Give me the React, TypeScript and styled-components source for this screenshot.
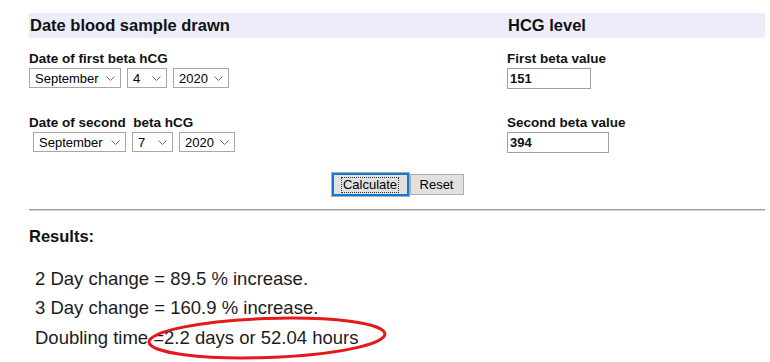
import React, {FC} from "react";
import styled, {createGlobalStyle} from "styled-components";

const GlobalStyle = createGlobalStyle`
  body {
    margin: 0;
    background: #fff;
    font-family: "Liberation Sans", Arial, sans-serif;
    color: #000;
  }
`;

const Page = styled.div`
  width: 770px;
  box-sizing: border-box;
  padding: 13px 5px 0 29px;
  overflow: hidden;
  height: 362px;
`;

const HeaderBand = styled.div`
  display: grid;
  grid-template-columns: 478px 1fr;
  align-items: center;
  height: 25px;
  background: #ececfb;
  font-size: 16.5px;
  font-weight: bold;
  color: #111;
  div {
    padding-left: 1px;
  }
`;

const FieldRow = styled.div<{$top: number}>`
  display: grid;
  grid-template-columns: 478px 1fr;
  margin-top: ${(p) => p.$top}px;
`;

const FieldLabel = styled.div`
  font-size: 13.5px;
  font-weight: bold;
  line-height: 15px;
  white-space: pre;
  color: #111;
`;

const SelectGroup = styled.div<{$indent: number}>`
  display: flex;
  gap: 6px;
  margin-top: 2px;
  padding-left: ${(p) => p.$indent}px;
`;

const SelectBox = styled.div<{$width: number}>`
  display: flex;
  align-items: center;
  box-sizing: border-box;
  width: ${(p) => p.$width}px;
  height: 20px;
  border: 1px solid #a6a6a6;
  background: #fff;
  svg {
    flex: none;
    margin-right: 5px;
  }
`;

const NativeSelect = styled.select`
  appearance: none;
  flex: 1;
  min-width: 0;
  height: 100%;
  border: 0;
  outline: none;
  background: transparent;
  padding: 0 0 0 5px;
  font-family: "Liberation Sans", Arial, sans-serif;
  font-size: 13px;
  color: #000;
`;

const ValueInput = styled.input<{$width: number}>`
  display: block;
  box-sizing: border-box;
  width: ${(p) => p.$width}px;
  height: 21px;
  margin-top: 2px;
  padding: 0 2px;
  border: 1px solid #a0a0a0;
  font-family: "Liberation Sans", Arial, sans-serif;
  font-size: 13px;
  font-weight: bold;
  color: #111;
  outline: none;
`;

const ButtonRow = styled.div`
  display: flex;
  justify-content: center;
  align-items: center;
  margin-top: 19px;
`;

const FormButton = styled.button<{$focused?: boolean}>`
  display: flex;
  align-items: center;
  justify-content: center;
  box-sizing: border-box;
  width: ${(p) => (p.$focused ? 79 : 54)}px;
  height: ${(p) => (p.$focused ? 25 : 21)}px;
  padding: 0;
  border: 1px solid #adadad;
  background: #e1e1e1;
  box-shadow: ${(p) => (p.$focused ? "inset 0 0 0 2px #0f78d8" : "none")};
  font-family: "Liberation Sans", Arial, sans-serif;
  font-size: 13px;
  color: #000;
  span {
    line-height: 14px;
    padding: 0 1px;
    outline: ${(p) => (p.$focused ? "1px dotted #333" : "none")};
  }
`;

const Rule = styled.div`
  margin-top: 12px;
  height: 1px;
  border-top: 1px solid #9c9c9c;
  background: #d4d4d4;
`;

const ResultsTitle = styled.div`
  margin-top: 15px;
  font-size: 16.5px;
  font-weight: bold;
  line-height: 20px;
  color: #111;
`;

const ResultList = styled.div`
  margin-top: 17.5px;
  padding-left: 6px;
  font-size: 18.5px;
  line-height: 29.5px;
  color: #1c1c1c;
`;

const Circled = styled.span`
  position: relative;
  svg {
    position: absolute;
    left: -6px;
    top: -10px;
    overflow: visible;
  }
`;

const Chevron: FC = () => (
  <svg width="9" height="5" viewBox="0 0 9 5">
    <path d="M0.5 0.5 L4.5 4.5 L8.5 0.5" fill="none" stroke="#6d6d6d" strokeWidth="1" />
  </svg>
);

const DateSelect: FC<{width: number; value: string}> = ({width, value}) => (
  <SelectBox $width={width}>
    <NativeSelect defaultValue={value}>
      <option value={value}>{value}</option>
    </NativeSelect>
    <Chevron />
  </SelectBox>
);

const App: FC = () => {
  return (
    <Page>
      <GlobalStyle />
      <HeaderBand>
        <div>Date blood sample drawn</div>
        <div>HCG level</div>
      </HeaderBand>

      <FieldRow $top={13}>
        <div>
          <FieldLabel>Date of first beta hCG</FieldLabel>
          <SelectGroup $indent={0}>
            <DateSelect width={92} value="September" />
            <DateSelect width={40} value="4" />
            <DateSelect width={56} value="2020" />
          </SelectGroup>
        </div>
        <div>
          <FieldLabel>First beta value</FieldLabel>
          <ValueInput $width={84} defaultValue="151" />
        </div>
      </FieldRow>

      <FieldRow $top={26}>
        <div>
          <FieldLabel>{"Date of second  beta hCG"}</FieldLabel>
          <SelectGroup $indent={4}>
            <DateSelect width={93} value="September" />
            <DateSelect width={41} value="7" />
            <DateSelect width={56} value="2020" />
          </SelectGroup>
        </div>
        <div>
          <FieldLabel>Second beta value</FieldLabel>
          <ValueInput $width={102} defaultValue="394" />
        </div>
      </FieldRow>

      <ButtonRow>
        <FormButton $focused><span>Calculate</span></FormButton>
        <FormButton><span>Reset</span></FormButton>
      </ButtonRow>

      <Rule />

      <ResultsTitle>Results:</ResultsTitle>

      <ResultList>
        <div>2 Day change = 89.5 % increase.</div>
        <div>3 Day change = 160.9 % increase.</div>
        <div>
          Doubling time{" "}
          <Circled>
            =2.2 days or 52.04 hours
            <svg width="240" height="42" viewBox="0 0 240 42">
              <ellipse
                cx="120"
                cy="21"
                rx="118"
                ry="19.5"
                fill="none"
                stroke="#e3191c"
                strokeWidth="3"
                transform="rotate(-2 120 21)"
              />
            </svg>
          </Circled>
        </div>
      </ResultList>
    </Page>
  );
};

export default App;
